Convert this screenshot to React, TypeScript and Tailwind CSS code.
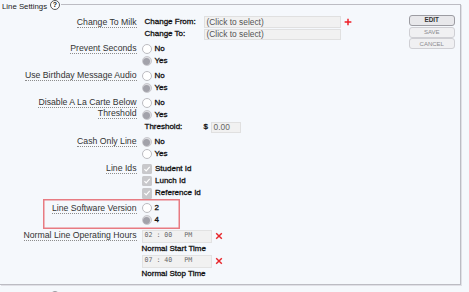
import React from 'react';

// Read-only "Line Settings" panel

const valueText = 'text-[8px] text-[#111] [-webkit-text-stroke:0.3px_#111]';

const Radio = ({ checked = false }: { checked?: boolean }) => (
  <span
    className={`flex h-[10px] w-[10px] shrink-0 items-center justify-center rounded-full border ${
      checked ? 'border-[#c9c9ce] bg-[#dedee2]' : 'border-[#bcbcc1] bg-white'
    }`}
  >
    {checked && <span className="h-[7px] w-[7px] rounded-full bg-[#a2a2aa]" />}
  </span>
);

const Check = () => (
  <span className="flex h-[10.5px] w-[10.5px] shrink-0 items-center justify-center rounded-[1.5px] bg-[#c8c8cb]">
    <svg viewBox="0 0 10 10" className="h-[8px] w-[8px]">
      <path d="M1.8 5.2 L4 7.4 L8.4 2.4" fill="none" stroke="#fff" strokeWidth="1.4" />
    </svg>
  </span>
);

const Line = ({ children }: { children: React.ReactNode }) => (
  <div className={`flex h-[12.3px] items-center gap-[3px] ${valueText}`}>{children}</div>
);

const Label = ({ children }: { children: React.ReactNode }) => (
  <div className="w-[136.5px] shrink-0 pt-[0.6px] text-right text-[8.7px] leading-[11px] text-[#333]">
    <span className="border-b border-dotted border-[#8c8c8c]">{children}</span>
  </div>
);

const Row = ({ label, children, className = '' }: { label: React.ReactNode; children: React.ReactNode; className?: string }) => (
  <div className={`flex gap-[5px] ${className}`}>
    <Label>{label}</Label>
    <div className="flex flex-col">{children}</div>
  </div>
);

const RadioPair = ({ a, b, checked }: { a: string; b: string; checked: 0 | 1 }) => (
  <>
    <Line>
      <Radio checked={checked === 0} />
      {a}
    </Line>
    <Line>
      <Radio checked={checked === 1} />
      {b}
    </Line>
  </>
);

const TimeInput = ({ value }: { value: string }) => (
  <div className="flex h-[13px] items-center gap-[3px]">
    <div className="flex h-[13px] w-[70px] items-center border border-[#e2e2e2] bg-[#f1f1f1] pl-[2px] font-['DejaVu_Sans_Mono',monospace] text-[6.6px] whitespace-pre text-[#666]">
      {value}
    </div>
    <svg viewBox="0 0 10 10" className="h-[8px] w-[8px]">
      <path d="M1.5 1.5 L8.5 8.5 M8.5 1.5 L1.5 8.5" stroke="#e8262b" strokeWidth="1.8" />
    </svg>
  </div>
);

export default function App() {
  return (
    <div className="h-[292px] w-full overflow-hidden bg-[#f5f8fc] font-['Liberation_Sans',Arial,sans-serif]">
      <fieldset className="mr-[8px] border-t border-r border-b border-l-0 border-[#bcbcc3] pt-[5.5px] pb-[5px] shadow-[1px_1px_0_#e0e0e6]">
        <legend className="flex h-[9.5px] items-start pr-[1.5px] pl-[2px]">
          <span className="mt-[2px] mb-[-2px] text-[7.8px] leading-[9px] text-[#222]">Line Settings</span>
          <span className="ml-[3px] flex h-[9.5px] w-[9.5px] items-center justify-center rounded-full border border-[#555] bg-white text-[7px] leading-none font-bold text-[#111]">
            ?
          </span>
        </legend>

        <div className="flex">
          <div className="mt-[1px] flex flex-1 flex-col gap-[2.3px]">
            <Row label="Change To Milk">
              <div className="flex h-[12.3px] items-center pl-[3px]">
                <span className={`w-[59px] ${valueText}`}>Change From:</span>
                <span className="flex h-[11.5px] w-[137.5px] items-center border border-[#e0e0e0] bg-[#f1f1f1] pl-[2px] text-[8.4px] text-[#555]">
                  (Click to select)
                </span>
                <svg viewBox="0 0 10 10" className="ml-[3px] h-[8px] w-[8px]">
                  <path d="M5 0.8 V9.2 M0.8 5 H9.2" stroke="#ee1c25" strokeWidth="1.8" />
                </svg>
              </div>
              <div className="flex h-[12.3px] items-center pl-[3px]">
                <span className={`w-[59px] ${valueText}`}>Change To:</span>
                <span className="flex h-[11.5px] w-[137.5px] items-center border border-[#e0e0e0] bg-[#f1f1f1] pl-[2px] text-[8.4px] text-[#555]">
                  (Click to select)
                </span>
              </div>
            </Row>

            <Row label="Prevent Seconds">
              <RadioPair a="No" b="Yes" checked={1} />
            </Row>

            <Row label="Use Birthday Message Audio">
              <RadioPair a="No" b="Yes" checked={1} />
            </Row>

            <Row
              label={
                <>
                  Disable A La Carte Below
                  <br />
                  Threshold
                </>
              }
            >
              <RadioPair a="No" b="Yes" checked={1} />
              <div className={`flex h-[12.3px] items-center pl-[3px] ${valueText}`}>
                <span className="w-[59px]">Threshold:</span>
                <span className="w-[7px]">$</span>
                <span className="flex h-[11.5px] w-[30px] items-center border border-[#e0e0e0] bg-[#f1f1f1] pl-[2px] text-[8.4px] text-[#666] [-webkit-text-stroke:0]">
                  0.00
                </span>
              </div>
            </Row>

            <Row label="Cash Only Line">
              <RadioPair a="No" b="Yes" checked={0} />
            </Row>

            <Row label="Line Ids">
              <Line>
                <Check />
                Student Id
              </Line>
              <Line>
                <Check />
                Lunch Id
              </Line>
              <Line>
                <Check />
                Reference Id
              </Line>
            </Row>

            <div className="relative">
              <Row label="Line Software Version">
                <RadioPair a="2" b="4" checked={1} />
              </Row>
              {/* highlight box drawn over the row */}
              <svg className="pointer-events-none absolute top-[-3px] left-[43px] h-[30px] w-[137px]" viewBox="0 0 137 30">
                <rect x="0.75" y="0.75" width="135.5" height="28.5" fill="none" stroke="#e87b82" strokeWidth="1.5" />
              </svg>
            </div>

            <Row label="Normal Line Operating Hours" className="mt-[1px]">
              <TimeInput value="02 : 00   PM" />
              <div className={`flex h-[12px] items-center ${valueText}`}>Normal Start Time</div>
              <TimeInput value="07 : 40   PM" />
              <div className={`flex h-[11.5px] items-center ${valueText}`}>Normal Stop Time</div>
            </Row>
          </div>

          <div className="mr-[5px] flex w-[46.5px] flex-col gap-[0.6px]">
            <button className="h-[11px] rounded-[3px] border border-[#9c9ca2] bg-[#e8e8eb] text-[6.4px] leading-none font-bold text-[#333]">
              EDIT
            </button>
            <button className="h-[11px] rounded-[3px] border border-[#cfcfd4] bg-[#f0f0f2] text-[6px] leading-none text-[#8a8a8f]">
              SAVE
            </button>
            <button className="h-[11px] rounded-[3px] border border-[#cfcfd4] bg-[#f0f0f2] text-[6px] leading-none text-[#8a8a8f]">
              CANCEL
            </button>
          </div>
        </div>
      </fieldset>

      <div className="mt-[6px] ml-[50px] h-[10px] w-[10px] rounded-full border border-[#9a9aa0]" />
    </div>
  );
}
